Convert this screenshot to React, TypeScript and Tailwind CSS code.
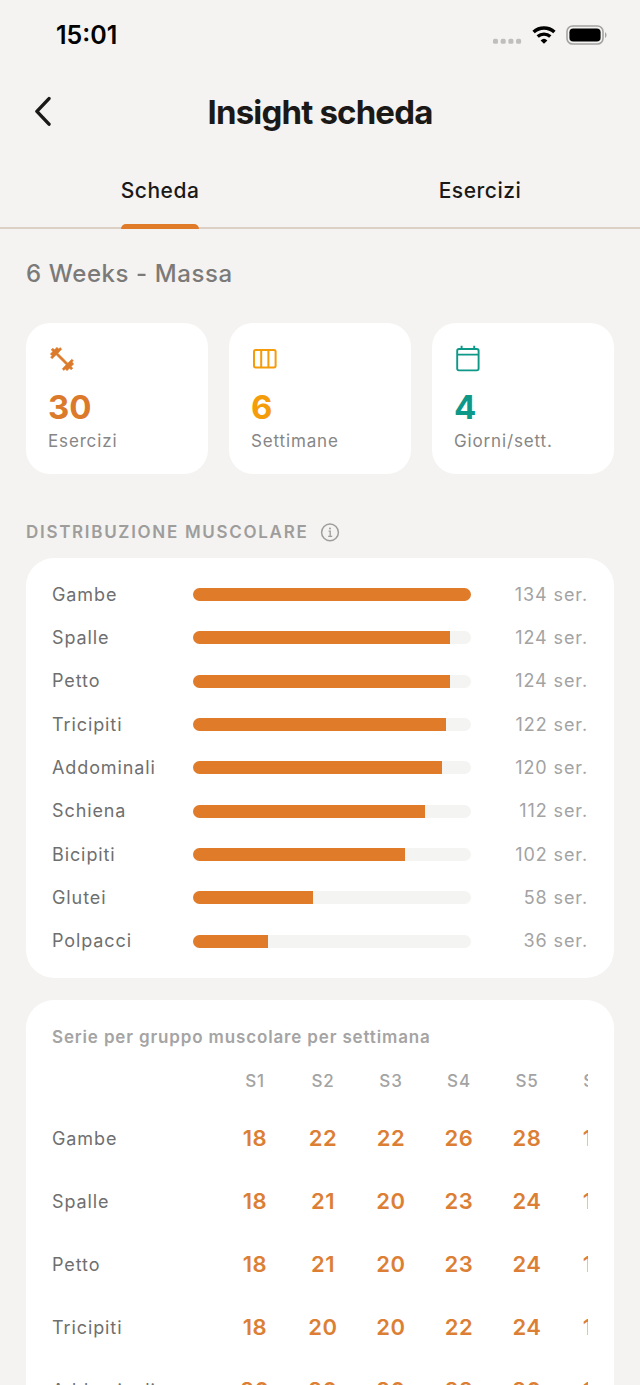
import { useState } from 'react'

interface Muscle {
  name: string
  total: number
  weeks: number[]
}

const MUSCLES: Muscle[] = [
  { name: 'Gambe', total: 134, weeks: [18, 22, 22, 26, 28, 18] },
  { name: 'Spalle', total: 124, weeks: [18, 21, 20, 23, 24, 18] },
  { name: 'Petto', total: 124, weeks: [18, 21, 20, 23, 24, 18] },
  { name: 'Tricipiti', total: 122, weeks: [18, 20, 20, 22, 24, 18] },
  { name: 'Addominali', total: 120, weeks: [20, 20, 20, 22, 20, 18] },
  { name: 'Schiena', total: 112, weeks: [16, 18, 18, 20, 22, 18] },
  { name: 'Bicipiti', total: 102, weeks: [15, 17, 17, 18, 20, 15] },
  { name: 'Glutei', total: 58, weeks: [8, 10, 10, 10, 12, 8] },
  { name: 'Polpacci', total: 36, weeks: [6, 6, 6, 6, 6, 6] },
]

const WEEKS = ['S1', 'S2', 'S3', 'S4', 'S5', 'S6']
const TABS = ['Scheda', 'Esercizi']
const MAX_TOTAL = Math.max(...MUSCLES.map((m) => m.total))

function DumbbellIcon() {
  return (
    <svg viewBox="0 0 24 24" className="size-7" fill="currentColor" stroke="currentColor" strokeWidth="0.5" strokeLinejoin="round" aria-hidden="true">
      <path d="M20.57 14.56L21.8 13.43 20.37 12.3 17 15.57 8.43 7 11.7 3.63 10.57 2.2 9.14 3.43 7.71 2 5.57 4.14 4.14 2.71 2.71 4.14l1.43 1.43L2 7.71l1.43 1.43L2.2 10.57 3.63 11.7 7 8.43 15.57 17 12.3 20.37 13.43 21.8l1.43-1.23L16.29 22l2.14-2.14 1.43 1.43 1.43-1.43-1.43-1.43L22 16.29z" />
    </svg>
  )
}

function WeeksIcon() {
  return (
    <svg viewBox="0 0 28 28" className="size-7" fill="none" stroke="currentColor" strokeWidth="2" aria-hidden="true">
      <rect x="3" y="5" width="21.6" height="17.4" rx="1.6" />
      <path d="M10.2 5v17.4M17.4 5v17.4" />
    </svg>
  )
}

function CalendarIcon() {
  return (
    <svg viewBox="0 0 28 28" className="size-7" fill="none" stroke="currentColor" strokeWidth="1.9" aria-hidden="true">
      <rect x="3.2" y="4" width="21.4" height="21.4" rx="1.8" />
      <path d="M3.2 9.6h21.4M7.6 0.8v3.2M20.2 0.8v3.2" />
    </svg>
  )
}

function StatusBar() {
  return (
    <div className="flex h-[70px] shrink-0 items-center justify-between pr-8 pl-14 text-black">
      <span className="text-[25px] leading-8 font-semibold">15:01</span>
      <div className="flex items-center gap-2">
        <svg viewBox="0 0 32 22" className="h-[22px] w-8" fill="#bfbebd" aria-hidden="true">
          <rect x="1" y="14.8" width="5" height="5" rx="1.6" />
          <rect x="8.7" y="14.8" width="5" height="5" rx="1.6" />
          <rect x="16.4" y="14.8" width="5" height="5" rx="1.6" />
          <rect x="24.1" y="14.8" width="5" height="5" rx="1.6" />
        </svg>
        <svg viewBox="0 0 26 20" className="h-5 w-[26px]" fill="none" stroke="currentColor" aria-hidden="true">
          <path d="M1.6 7a15.6 15.6 0 0 1 20.8 0" strokeWidth="3.6" />
          <path d="M5.7 11.5a9.4 9.4 0 0 1 12.6 0" strokeWidth="3.4" />
          <path d="M12 18.8l-3.4-3.4a5 5 0 0 1 6.8 0z" fill="currentColor" stroke="none" />
        </svg>
        <svg viewBox="0 0 42 20" className="h-5 w-[42px]" aria-hidden="true">
          <rect x="1" y="1" width="36" height="18" rx="5.6" fill="none" stroke="#a3a3a2" strokeWidth="1.6" />
          <rect x="3.4" y="3.4" width="31.2" height="13.2" rx="3.8" fill="#000" />
          <path d="M39 7.2c2 .8 2 4.8 0 5.6z" fill="#a3a3a2" />
        </svg>
      </div>
    </div>
  )
}

interface StatCardProps {
  icon: React.ReactNode
  value: number
  label: string
  color: string
}

function StatCard({ icon, value, label, color }: StatCardProps) {
  return (
    <div className="flex-1 rounded-3xl bg-white px-[22px] pt-[22px] pb-[21px]">
      <div className={color}>
        {icon}
        <div className="mt-3 text-[33px] leading-11 font-bold">{value}</div>
      </div>
      <div className="text-[17px] leading-6 tracking-wider text-[#868686]">{label}</div>
    </div>
  )
}

export default function App() {
  const [tab, setTab] = useState('Scheda')

  return (
    <div className="flex h-screen flex-col overflow-hidden bg-[#f4f3f1] font-['Inter',sans-serif] text-[#1b1918]">
      <StatusBar />

      <header className="grid h-[84px] shrink-0 grid-cols-[48px_1fr_48px] items-center px-5">
        <button type="button" aria-label="Indietro" className="flex size-12 items-center justify-center">
          <svg viewBox="0 0 18 32" className="h-8 w-[18px]" fill="none" stroke="currentColor" strokeWidth="3.4" strokeLinecap="round" strokeLinejoin="round" aria-hidden="true">
            <path d="M14 2.6L1.9 15.4 14 28.2" />
          </svg>
        </button>
        <h1 className="text-center text-[33px] leading-11 font-bold tracking-tight">Insight scheda</h1>
      </header>

      <nav role="tablist" className="flex h-[75px] shrink-0 border-b-2 border-[#dccfc4]">
        {TABS.map((name) => (
          <button
            key={name}
            type="button"
            role="tab"
            aria-selected={tab === name}
            onClick={() => setTab(name)}
            className="flex flex-1 justify-center"
          >
            <span
              className={`relative flex h-full items-center text-[21px] font-medium tracking-wide ${
                tab === name ? 'after:absolute after:inset-x-0 after:bottom-[-2px] after:h-[5px] after:rounded-t-full after:bg-[#e07b29]' : ''
              }`}
            >
              {name}
            </span>
          </button>
        ))}
      </nav>

      <main className="flex-1 overflow-y-auto px-[26px] pt-7 [scrollbar-width:none]">
        <h2 className="text-2xl leading-[34px] font-medium tracking-wide text-[#7b7a79]">6 Weeks - Massa</h2>

        <div className="mt-8 flex gap-[21px]">
          <StatCard icon={<DumbbellIcon />} value={30} label="Esercizi" color="text-[#dc7a2b]" />
          <StatCard icon={<WeeksIcon />} value={6} label="Settimane" color="text-[#f59c0b]" />
          <StatCard icon={<CalendarIcon />} value={4} label="Giorni/sett." color="text-[#0d9888]" />
        </div>

        <div className="mt-[47px] flex h-6 items-center gap-3 text-[#9e9d9c]">
          <h3 className="text-[17px] font-semibold tracking-widest uppercase">Distribuzione muscolare</h3>
          <svg viewBox="0 0 20 20" className="size-5" fill="none" stroke="currentColor" strokeWidth="1.5" aria-hidden="true">
            <circle cx="10" cy="9.4" r="8.4" />
            <path d="M8.6 8.2H10.2v5M8.2 13.3h4" strokeWidth="1.3" />
            <circle cx="10" cy="5.6" r="1" fill="currentColor" stroke="none" />
          </svg>
        </div>

        <section className="mt-[13px] rounded-[28px] bg-white px-[26px] py-[15px]">
          <ul className="grid min-h-[390px] auto-rows-fr">
            {MUSCLES.map((m) => (
              <li key={m.name} className="flex items-center text-lg">
                <span className="w-[141px] tracking-wider text-[#6f6f6f]">{m.name}</span>
                <span className="h-[13px] flex-1 overflow-hidden rounded-full bg-[#f4f4f3]">
                  <span className="block h-full bg-[#e07b29]" style={{ width: `${(m.total / MAX_TOTAL) * 100}%` }} />
                </span>
                <span className="w-[117px] text-right tracking-wider text-[#a3a3a3]">{m.total} ser.</span>
              </li>
            ))}
          </ul>
        </section>

        <section className="mt-[22px] rounded-[28px] bg-white px-[26px] pt-[25px] pb-6">
          <h3 className="text-[17px] leading-6 font-semibold tracking-wider text-[#a5a4a4]">Serie per gruppo muscolare per settimana</h3>
          <div className="mt-2 overflow-x-auto [scrollbar-width:none]">
            <table className="w-[577px] table-fixed">
              <thead>
                <tr className="h-[50px] text-[17px] tracking-wider text-[#a3a3a3]">
                  <th className="w-[169px]" aria-label="Gruppo muscolare" />
                  {WEEKS.map((w) => (
                    <th key={w} scope="col" className="font-medium">{w}</th>
                  ))}
                </tr>
              </thead>
              <tbody>
                {MUSCLES.map((m) => (
                  <tr key={m.name} className="h-[63px]">
                    <th scope="row" className="text-left text-lg font-normal tracking-wider text-[#6f6f6f]">{m.name}</th>
                    {m.weeks.map((sets, i) => (
                      <td key={i} className="text-center text-[22px] font-semibold tracking-wide text-[#dc7f35]">{sets}</td>
                    ))}
                  </tr>
                ))}
              </tbody>
            </table>
          </div>
        </section>
      </main>
    </div>
  )
}
